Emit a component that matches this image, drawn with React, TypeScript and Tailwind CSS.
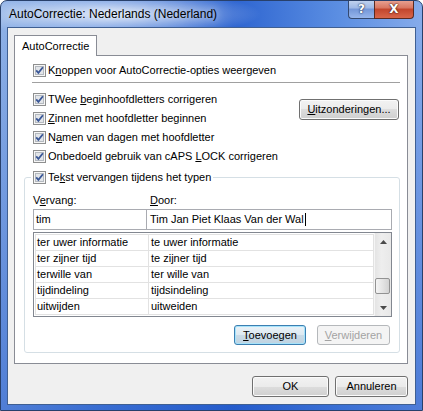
import type { ReactNode } from "react";

const rows = [
  ["ter uwer informatie", "te uwer informatie"],
  ["ter zijner tijd", "te zijner tijd"],
  ["terwille van", "ter wille van"],
  ["tijdindeling", "tijdsindeling"],
  ["uitwijden", "uitweiden"],
];

function Check() {
  return (
    <svg width="13" height="13" viewBox="0 0 13 13" className="shrink-0">
      <rect x="0.5" y="0.5" width="12" height="12" fill="#f6f6f6" stroke="#8e8f8f" />
      <rect x="2.5" y="2.5" width="8" height="8" fill="#e2e5e9" stroke="#b4b9bf" />
      <path d="M3.2 6.4 L5.4 8.9 L9.9 3.3" fill="none" stroke="#3a5797" strokeWidth="1.8" />
    </svg>
  );
}

function CheckRow({ children }: { children: ReactNode }) {
  return (
    <div className="flex h-[19px] items-center gap-[2px]">
      <Check />
      <span className="whitespace-nowrap">{children}</span>
    </div>
  );
}

function Btn({
  children,
  className = "",
  kind = "normal",
}: {
  children: ReactNode;
  className?: string;
  kind?: "normal" | "default" | "disabled";
}) {
  const look =
    kind === "default"
      ? "border-[#3c7fb1] bg-[linear-gradient(#eaf2f7,#dde9f1_50%,#cadbe7_50%,#bfd3e1)] shadow-[inset_0_0_0_1px_#a6e3fb]"
      : kind === "disabled"
        ? "border-[#b5b8bb] bg-[#f4f4f4] text-[#a3a3a3]"
        : "border-[#707070] bg-[linear-gradient(#f2f2f2,#ebebeb_50%,#dddddd_50%,#cfcfcf)] shadow-[inset_0_0_0_1px_#fbfbfb]";
  return (
    <div
      className={`flex items-center justify-center rounded-[3px] border whitespace-nowrap ${look} ${className}`}
    >
      {children}
    </div>
  );
}

function Arrow({ up }: { up?: boolean }) {
  return (
    <svg width="7" height="4" viewBox="0 0 7 4">
      <polygon points={up ? "3.5,0 7,4 0,4" : "0,0 7,0 3.5,4"} fill="#4a4a4a" />
    </svg>
  );
}

export default function App() {
  return (
    <div className="flex h-[411px] w-[423px] flex-col overflow-hidden rounded-t-[7px] border border-[#28406b] bg-[radial-gradient(ellipse_150px_24px_at_110px_13px,rgba(255,255,255,0.8),transparent),linear-gradient(180deg,transparent_8%,rgba(30,85,200,0.55)),linear-gradient(90deg,#8db0e6,#5a8bdd_22%,#2d64d0_55%,#5b8ee2_80%,#86abea)] font-['Liberation_Sans',Arial,sans-serif] text-[11px] leading-[13px] text-black">
      {/* title bar */}
      <div className="flex h-[26px] shrink-0 items-center">
        <span className="pl-[8px] text-[12px] [text-shadow:0_0_8px_rgba(255,255,255,0.9)]">
          AutoCorrectie: Nederlands (Nederland)
        </span>
        <div className="mr-[8px] ml-auto -mt-px flex self-start">
          <div className="flex h-[19px] w-[26px] items-center justify-center rounded-bl-[4px] border border-t-0 border-r-0 border-[#34496f] bg-[linear-gradient(#c4d5f0,#9db8e6_45%,#7396d8_50%,#97b6ec)] font-['DejaVu_Sans',sans-serif] text-[12px] font-bold text-white [text-shadow:0_0_1px_#1b2a4a,0_0_2px_#1b2a4a]">
            ?
          </div>
          <div className="flex h-[19px] w-[40px] items-center justify-center rounded-br-[4px] border border-t-0 border-[#5a2a22] bg-[linear-gradient(#e9a596,#d87560_45%,#c2452c_50%,#d8664a)] font-['DejaVu_Sans',sans-serif] text-[12px] font-bold text-white [text-shadow:0_0_1px_#3a150e,0_0_2px_#3a150e]">
            X
          </div>
        </div>
      </div>

      {/* client area */}
      <div className="mx-[6px] flex h-[378px] shrink-0 flex-col border border-[#3f5f92] bg-[#f0f0f0] pt-[7px] pr-[7px] pl-[6px]">
        <div className="relative z-10 -mb-px flex h-[21px] w-fit items-center border border-b-0 border-[#898c95] bg-white px-[7px]">
          AutoCorrectie
        </div>

        <div className="flex h-[309px] flex-col border border-[#898c95] bg-white pt-[5px]">
          <div className="pl-[18px]">
            <CheckRow>
              K<u>n</u>oppen voor AutoCorrectie-opties weergeven
            </CheckRow>
          </div>
          <div className="mt-[2px] mr-[7px] ml-[17px] h-px bg-[#a0a0a0]" />

          <div className="mt-[7px] flex pr-[8px] pl-[18px]">
            <div className="flex flex-col">
              <CheckRow>
                TWee <u>b</u>eginhoofdletters corrigeren
              </CheckRow>
              <CheckRow>
                <u>Z</u>innen met hoofdletter beginnen
              </CheckRow>
              <CheckRow>
                N<u>a</u>men van dagen met hoofdletter
              </CheckRow>
              <CheckRow>
                Onbedoeld gebruik van cAPS <u>L</u>OCK corrigeren
              </CheckRow>
            </div>
            <Btn className="mt-[9px] ml-auto h-[21px] w-[100px]">
              <span>
                <u>U</u>itzonderingen...
              </span>
            </Btn>
          </div>

          <fieldset className="mt-[2px] mr-[7px] ml-[9px] rounded-[3px] border border-[#d5dfe5] pr-[7px] pb-[7px] pl-[8px]">
            <legend className="-ml-[2px] px-[2px]">
              <CheckRow>
                Te<u>k</u>st vervangen tijdens het typen
              </CheckRow>
            </legend>

            <div className="mt-[5px] grid h-[16px] grid-cols-[114px_245px] items-center">
              <span>
                V<u>e</u>rvang:
              </span>
              <span className="pl-[3px]">
                <u>D</u>oor:
              </span>
            </div>

            <div className="mt-[1px] grid h-[21px] grid-cols-[114px_245px]">
              <div className="flex items-center border border-[#a9abb1] pl-[2px]">tim</div>
              <div className="flex items-center border border-l-0 border-[#a9abb1] pl-[3px]">
                <span className="whitespace-nowrap">Tim Jan Piet Klaas Van der Wal</span>
                <span className="ml-px h-[13px] w-px bg-black" />
              </div>
            </div>

            <div className="mt-[2px] flex h-[85px] border border-[#828790]">
              <div className="flex-1 pt-[1px] pl-[1px]">
                <div className="border-t border-l border-[#e2e2e2]">
                  {rows.map(([a, b]) => (
                    <div key={a} className="flex h-[16px] border-b border-[#e2e2e2]">
                      <div className="flex w-[113px] items-center border-r border-[#e2e2e2] pl-[1px]">
                        {a}
                      </div>
                      <div className="flex flex-1 items-center border-r border-[#e2e2e2] pl-[2px]">
                        {b}
                      </div>
                    </div>
                  ))}
                </div>
              </div>
              <div className="flex w-[17px] flex-col border-l border-[#f5f5f5] bg-[linear-gradient(90deg,#e4e4e4,#eeeeee_40%,#e8e8e8)]">
                <div className="flex h-[17px] items-center justify-center">
                  <Arrow up />
                </div>
                <div className="flex-1">
                  <div className="mt-[28px] mr-px h-[16px] rounded-[2px] border border-[#929292] bg-[linear-gradient(90deg,#f4f4f4,#e4e4e4_50%,#d2d2d2)]" />
                </div>
                <div className="flex h-[17px] items-center justify-center">
                  <Arrow />
                </div>
              </div>
            </div>

            <div className="mt-[8px] flex h-[20px] justify-end gap-[11px] pr-[2px]">
              <Btn kind="default" className="w-[72px]">
                <span>
                  <u>T</u>oevoegen
                </span>
              </Btn>
              <Btn kind="disabled" className="w-[73px]">
                <span>
                  <u>V</u>erwijderen
                </span>
              </Btn>
            </div>
          </fieldset>
        </div>

        <div className="mt-[12px] flex justify-end gap-[6px]">
          <Btn className="h-[21px] w-[77px]">OK</Btn>
          <Btn className="h-[21px] w-[73px]">Annuleren</Btn>
        </div>
      </div>
    </div>
  );
}
